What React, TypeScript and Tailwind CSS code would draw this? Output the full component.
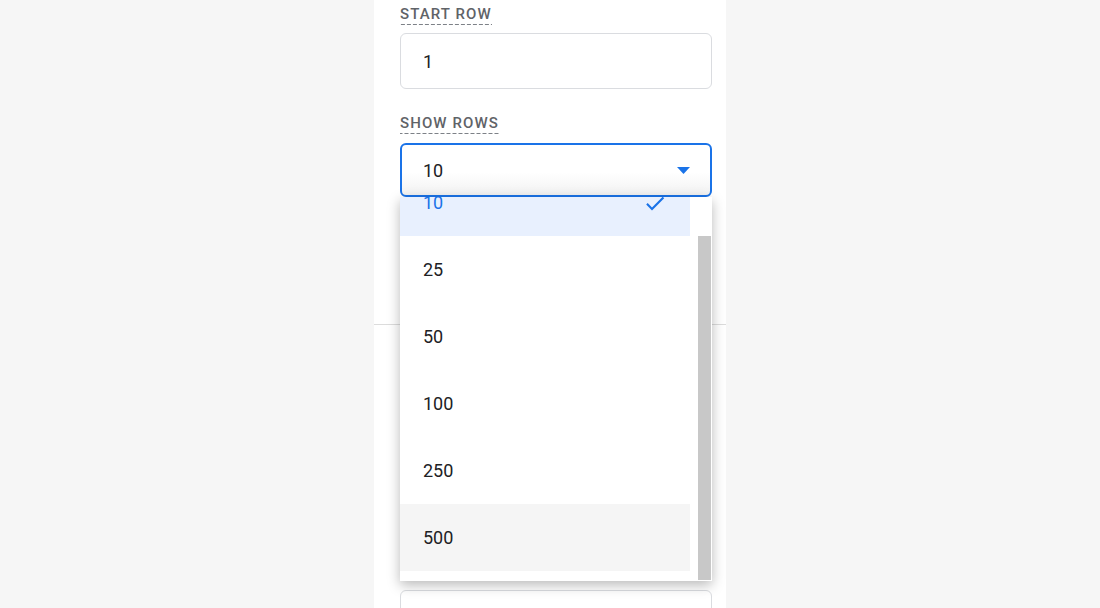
import type { ReactNode } from "react";

const options = ["10", "25", "50", "100", "250", "500"];

function FieldLabel({ children, className = "" }: { children: ReactNode; className?: string }) {
  return (
    <span
      className={`block w-fit bg-[linear-gradient(to_right,#7d8187_66%,transparent_0)] bg-[length:6px_1px] bg-bottom bg-repeat-x pb-px text-[15px] font-medium uppercase leading-[20px] tracking-[1.1px] text-[#5f6368] ${className}`}
    >
      {children}
    </span>
  );
}

function CheckIcon() {
  return (
    <svg width="24" height="24" viewBox="0 0 24 24" className="fill-[#1a73e8]">
      <path d="M9 16.4 4.7 12.1l-1.5 1.5L9 19.4 21.2 7.2l-1.5-1.5z" />
    </svg>
  );
}

export default function App() {
  return (
    <div className="h-[608px] overflow-hidden bg-[#f6f6f6] font-['Roboto',sans-serif] text-[#202124]">
      <div className="mx-auto h-full w-[352px] bg-white">
        <div className="pl-[26px] pr-[14px] pt-[4px]">
          <div>
            <FieldLabel>Start Row</FieldLabel>
            <div className="mt-[8px] flex h-[56px] items-center rounded-[6px] border border-[#dadce0] px-[22px] text-[18px]">
              1
            </div>
          </div>

          <div className="mt-[24px]">
            <FieldLabel>Show Rows</FieldLabel>
            <div className="relative mt-[9px]">
              <div className="flex h-[54px] items-center justify-between rounded-[6px] border-2 border-[#1a73e8] bg-[linear-gradient(to_bottom,#ffffff_55%,#f2f2f2)] pl-[21px] pr-[20px] text-[18px]">
                <span>10</span>
                <svg width="13" height="7" viewBox="0 0 13 7" className="fill-[#1a73e8]">
                  <path d="M0 0h13L6.5 7z" />
                </svg>
              </div>

              <div className="absolute left-0 top-full z-10 flex h-[384px] w-[312px] overflow-hidden bg-white shadow-[0_4px_12px_rgba(0,0,0,0.28)]">
                <ul className="-mt-[28px] w-[290px] shrink-0">
                  {options.map((opt) => {
                    const selected = opt === "10";
                    const hovered = opt === "500";
                    return (
                      <li
                        key={opt}
                        className={`flex h-[67px] items-center justify-between px-[23px] text-[18px] ${
                          selected ? "bg-[#e8f0fe] text-[#1a73e8]" : hovered ? "bg-[#f5f5f5]" : ""
                        }`}
                      >
                        <span>{opt}</span>
                        {selected && <CheckIcon />}
                      </li>
                    );
                  })}
                </ul>
                <div className="mb-px ml-auto mr-px mt-[39px] w-[13px] bg-[#c8c8c8]" />
              </div>
            </div>
          </div>
        </div>

        <div className="mt-[127px] border-t border-[#dcdcdc]" />

        <div className="pl-[26px] pr-[14px] pt-[235px]">
          <FieldLabel className="w-[196px]">Rows per page</FieldLabel>
          <div className="mt-[9px] h-[56px] rounded-[6px] border border-[#dadce0]" />
        </div>
      </div>
    </div>
  );
}
